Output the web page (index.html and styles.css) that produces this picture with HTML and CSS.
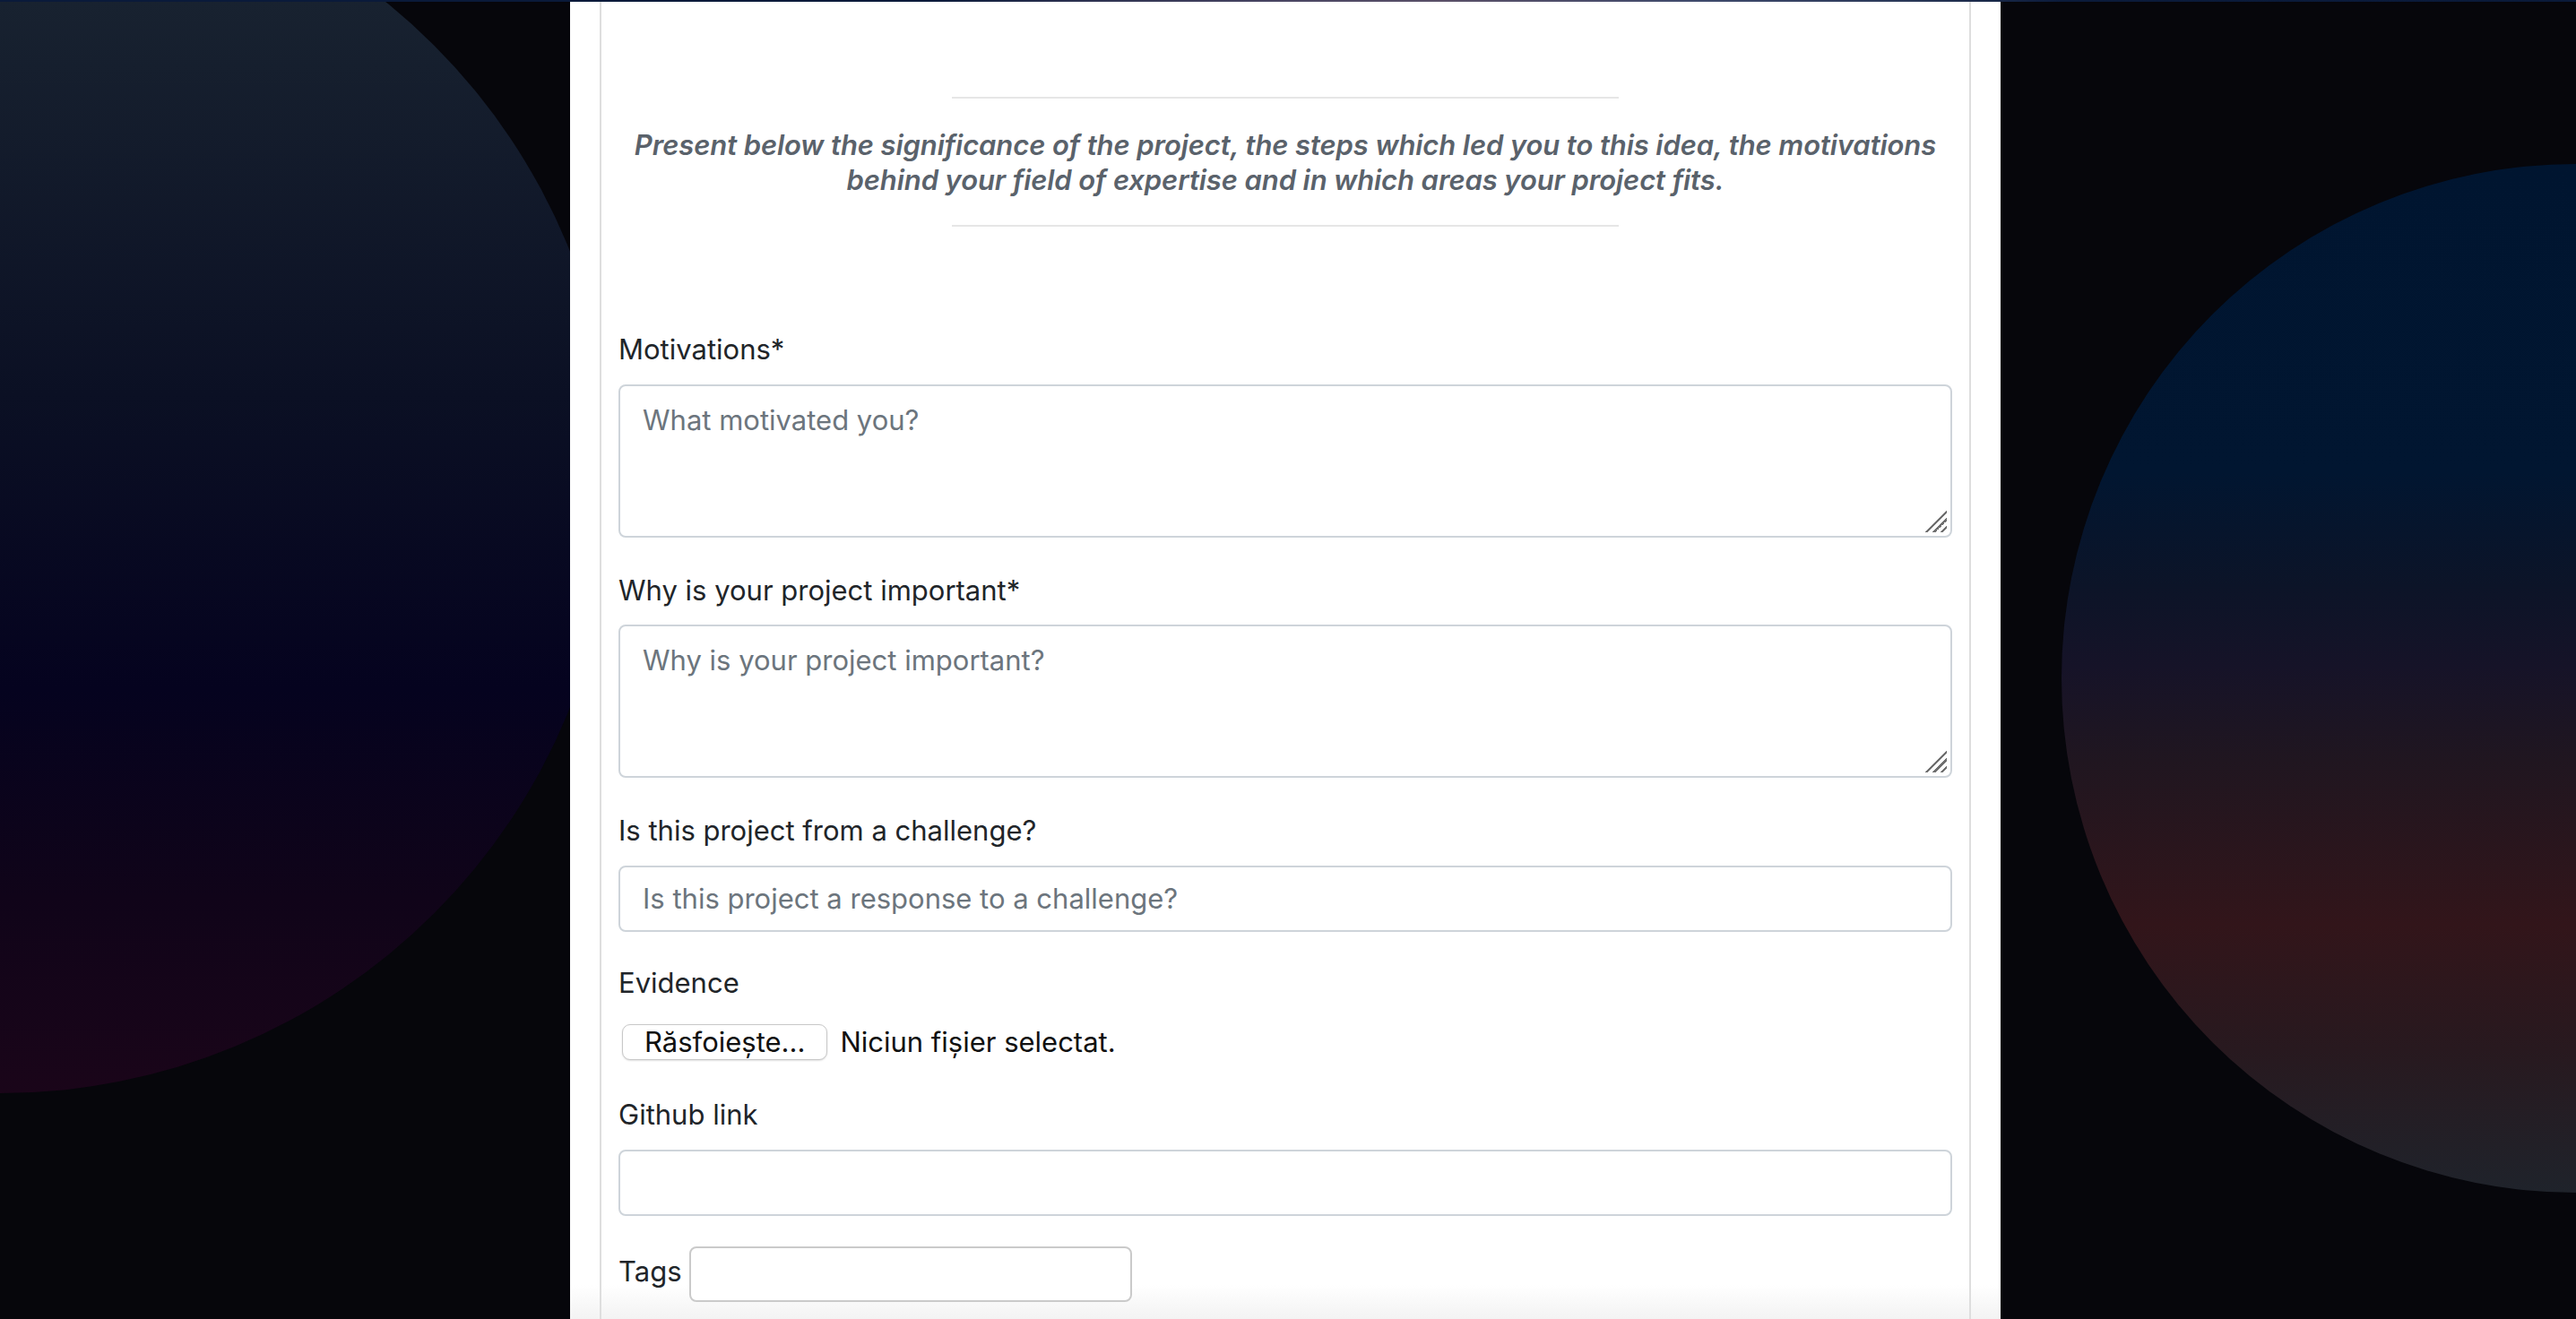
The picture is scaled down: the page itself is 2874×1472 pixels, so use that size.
FILE: index.html
```html
<!DOCTYPE html>
<html lang="en">
<head>
<meta charset="utf-8">
<title>Project form</title>
<link rel="stylesheet" href="styles.css">
</head>
<body>
<div class="topband"></div>
<div class="orb orb-left"></div>
<div class="orb orb-right"></div>
<main class="page">
  <section class="card">
    <div class="panel">
      <div class="intro">
        <hr class="rule">
        <p class="lead">Present below the significance of the project, the steps which led you to this idea, the motivations<br>behind your field of expertise and in which areas your project fits.</p>
        <hr class="rule">
      </div>
      <form class="form">
        <div class="group group-area">
          <label class="label" for="motivations">Motivations*</label>
          <textarea id="motivations" class="control area" rows="3" placeholder="What motivated you?"></textarea>
        </div>
        <div class="group group-area">
          <label class="label" for="important">Why is your project important*</label>
          <textarea id="important" class="control area" rows="3" placeholder="Why is your project important?"></textarea>
        </div>
        <div class="group">
          <label class="label" for="challenge">Is this project from a challenge?</label>
          <input id="challenge" class="control field" type="text" placeholder="Is this project a response to a challenge?">
        </div>
        <div class="group group-file">
          <label class="label">Evidence</label>
          <div class="file-row">
            <button type="button" class="file-btn">Răsfoiește...</button>
            <span class="file-name">Niciun fișier selectat.</span>
          </div>
        </div>
        <div class="group">
          <label class="label" for="github">Github link</label>
          <input id="github" class="control field" type="text">
        </div>
        <div class="tags-row">
          <label class="label tags-label" for="tags">Tags</label>
          <input id="tags" class="tags-input" type="text">
        </div>
      </form>
    </div>
  </section>
</main>
</body>
</html>
```
FILE: styles.css
```css
html, body {
  margin: 0;
  padding: 0;
  height: 1472px;
  overflow: hidden;
}

body {
  background: #06060b;
  font-family: Inter, "Noto Sans", "Liberation Sans", sans-serif;
  color: #212529;
  position: relative;
}

.topband {
  height: 2px;
  background: linear-gradient(to right, #0a1a3a 0%, #0a1a3a 36%, #2c3150 42%, #4a4663 50%, #5a5068 56%, #3f4a6c 66%, #2a3858 74%, #0b1b3b 80%, #0a1a3a 100%);
  position: relative;
  z-index: 2;
}

.orb {
  position: fixed;
  border-radius: 50%;
  z-index: 0;
}

.orb-left {
  left: -685px;
  top: -150px;
  width: 1370px;
  height: 1370px;
  background: linear-gradient(to bottom, #1b2535 0%, #182230 11%, #0b1024 43%, #05031f 67%, #100419 84%, #1a0519 100%);
}

.orb-right {
  left: 2300px;
  top: 183px;
  width: 1148px;
  height: 1148px;
  background: linear-gradient(to bottom, #001530 0%, #011631 30%, #0c1428 41%, #161328 49%, #201620 58%, #32151a 74%, #28191f 86%, #1f232b 100%);
}

.page {
  position: relative;
  z-index: 1;
  display: flex;
  padding-left: 636px;
}

.card {
  width: 1596px;
  height: 1470px;
  box-sizing: border-box;
  padding: 0 33px;
  background: linear-gradient(to bottom, #ffffff 0, #ffffff 1432px, #f3f3f3 1470px);
}

.panel {
  height: 100%;
  box-sizing: border-box;
  border-left: 2px solid #dedede;
  border-right: 2px solid #dedede;
  padding: 0 19px 0 19px;
}

.intro {
  padding-top: 106px;
  display: flex;
  flex-direction: column;
  align-items: center;
}

.rule {
  width: 744px;
  height: 2px;
  border: 0;
  margin: 0;
  background: #e6e6e6;
}

.lead {
  margin: 32px 0 31px;
  font-size: 31px;
  line-height: 39px;
  font-style: italic;
  font-weight: 600;
  color: #5a626b;
  text-align: center;
  white-space: nowrap;
  letter-spacing: -0.1px;
}

.form {
  margin-top: 114px;
  display: flex;
  flex-direction: column;
}

.group {
  display: flex;
  flex-direction: column;
  margin-bottom: 34px;
}

.group-area {
  margin-bottom: 36px;
}

.label {
  font-size: 31px;
  line-height: 46.5px;
  color: #212529;
  margin-bottom: 15px;
}

.control {
  font-family: Inter, "Noto Sans", "Liberation Sans", sans-serif;
  font-size: 31px;
  color: #212529;
  background-color: #fff;
  border: 2px solid #ced4da;
  border-radius: 8px;
  box-sizing: border-box;
  width: 100%;
  margin: 0;
  outline: none;
}

.control::placeholder {
  color: #6c757d;
  opacity: 1;
}

.area {
  height: 171px;
  padding: 15px 25px 10px;
  line-height: 46.5px;
  resize: none;
  display: block;
  background-image: linear-gradient(135deg, transparent 0, transparent 52%, #6f6f6f 52%, #6f6f6f 58%, transparent 58%, transparent 69%, #6f6f6f 69%, #6f6f6f 75%, transparent 75%, transparent 86%, #6f6f6f 86%, #6f6f6f 92%, transparent 92%);
  background-repeat: no-repeat;
  background-size: 26px 26px;
  background-position: right 4px bottom 4px;
}

.field {
  height: 74px;
  padding: 0 25px;
  display: block;
}

.group-file {
  margin-bottom: 38px;
}

.file-row {
  display: flex;
  align-items: center;
  gap: 14px;
  margin-top: 8px;
  padding-left: 4px;
}

.file-btn {
  height: 40px;
  box-sizing: border-box;
  padding: 0 24px;
  font-family: Inter, "Noto Sans", "Liberation Sans", sans-serif;
  font-size: 31px;
  line-height: 38px;
  color: #111;
  background: #fff;
  border: 1px solid #c8c8c8;
  border-radius: 9px;
  box-shadow: 0 1px 2px rgba(0, 0, 0, 0.12);
}

.file-name {
  font-size: 31px;
  line-height: 40px;
  color: #111;
}

.tags-row {
  display: flex;
  align-items: flex-start;
}

.tags-label {
  margin: 5px 0 0 0;
}

.tags-input {
  width: 494px;
  height: 62px;
  box-sizing: border-box;
  margin-left: 8px;
  border: 2px solid #cacaca;
  border-radius: 8px;
  background: #fff;
  outline: none;
}
```
